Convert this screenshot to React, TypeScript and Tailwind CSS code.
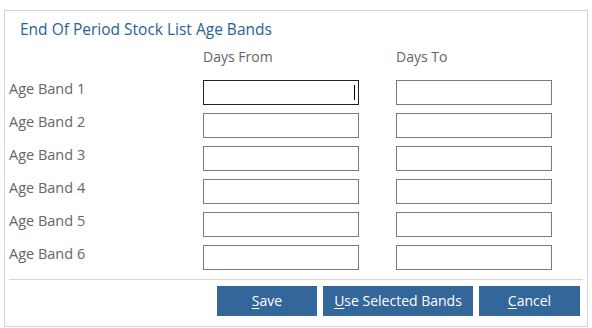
import React from 'react';

const bands = [1, 2, 3, 4, 5, 6];

const FormButton: React.FC<{ hot: string; rest: string; className: string }> = ({ hot, rest, className }) => (
    <button
        type="button"
        className={`h-[30px] bg-[#336699] text-white text-[14px] leading-none flex items-center justify-center ${className}`}
    >
        <span>
            <span className="underline underline-offset-2">{hot}</span>
            {rest}
        </span>
    </button>
);

const App: React.FC = () => {
    return (
        <div
            className="w-[592px] h-[328px] bg-white pt-[10px] pl-[4px]"
            style={{ fontFamily: '"Segoe UI", "Open Sans", "Liberation Sans", sans-serif' }}
        >
            <div className="w-[584px] h-[317px] border border-[#d4d4d4] flex flex-col">
                <h2 className="text-[#2a5f96] text-[15.5px] leading-[20px] pl-[15px] pt-[8px]">
                    End Of Period Stock List Age Bands
                </h2>

                <div className="grid grid-cols-[194px_193px_156px] pl-[4px] mt-[8px] text-[14px] text-[#666666]">
                    <div />
                    <div className="leading-[20px]">Days From</div>
                    <div className="leading-[20px]">Days To</div>
                </div>

                <div className="flex flex-col gap-[8px] pl-[4px] mt-[13px]">
                    {bands.map((n) => (
                        <div key={n} className="grid grid-cols-[194px_193px_156px] items-start">
                            <div className="text-[14.5px] text-[#666666] leading-[16px] pt-[1px]">Age Band {n}</div>
                            <div
                                className={`w-[156px] h-[25px] border ${
                                    n === 1 ? 'border-[#222222]' : 'border-[#7a7a7a]'
                                } bg-white flex items-center justify-end pr-[3px]`}
                            >
                                {n === 1 && <div className="w-px h-[15px] bg-black" />}
                            </div>
                            <div className="w-[156px] h-[25px] border border-[#7a7a7a] bg-white" />
                        </div>
                    ))}
                </div>

                <div className="mx-[4px] mt-[9px] border-t border-[#d4d4d4]" />

                <div className="flex justify-end gap-[6px] pr-[7px] mt-[6px]">
                    <FormButton hot="S" rest="ave" className="w-[100px]" />
                    <FormButton hot="U" rest="se Selected Bands" className="w-[150px]" />
                    <FormButton hot="C" rest="ancel" className="w-[101px]" />
                </div>
            </div>
        </div>
    );
};

export default App;
